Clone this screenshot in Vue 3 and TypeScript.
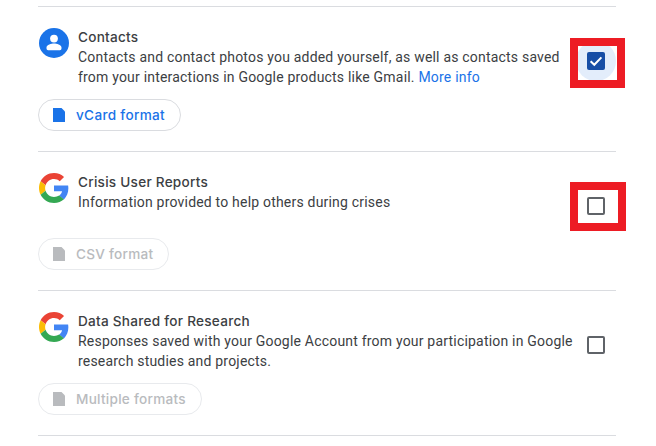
<script setup lang="ts">
interface Item {
  title: string
  desc: string
  link?: string
  format: string
  icon: 'contacts' | 'google'
  checked: boolean
  disabled: boolean
  mark?: string
}
const items: Item[] = [
  {
    title: 'Contacts',
    desc: 'Contacts and contact photos you added yourself, as well as contacts saved from your interactions in Google products like Gmail.',
    link: 'More info',
    format: 'vCard format',
    icon: 'contacts',
    checked: true,
    disabled: false,
    mark: 'mark-a',
  },
  {
    title: 'Crisis User Reports',
    desc: 'Information provided to help others during crises',
    format: 'CSV format',
    icon: 'google',
    checked: false,
    disabled: true,
    mark: 'mark-b',
  },
  {
    title: 'Data Shared for Research',
    desc: 'Responses saved with your Google Account from your participation in Google research studies and projects.',
    format: 'Multiple formats',
    icon: 'google',
    checked: false,
    disabled: true,
  },
]
</script>

<template>
  <main class="list">
    <section v-for="item in items" :key="item.title" class="item">
      <div class="row">
        <svg v-if="item.icon === 'contacts'" class="logo" viewBox="0 0 30 30">
          <circle cx="15" cy="15" r="15" fill="#1a73e8" />
          <circle cx="15" cy="10.6" r="3.9" fill="#fff" />
          <path d="M7.5 19.6c0-2.7 5-4 7.5-4s7.5 1.3 7.5 4v1a1.6 1.6 0 0 1-1.6 1.6H9.1a1.6 1.6 0 0 1-1.6-1.6z" fill="#fff" />
        </svg>
        <svg v-else class="logo" viewBox="0 0 48 48">
          <path fill="#EA4335" d="M24 9.5c3.54 0 6.71 1.22 9.21 3.6l6.85-6.85C35.9 2.38 30.47 0 24 0 14.62 0 6.51 5.38 2.56 13.22l7.98 6.19C12.43 13.72 17.74 9.5 24 9.5z" />
          <path fill="#4285F4" d="M46.98 24.55c0-1.57-.15-3.09-.38-4.55H24v9.02h12.94c-.58 2.96-2.26 5.48-4.78 7.18l7.73 6c4.51-4.18 7.09-10.36 7.09-17.65z" />
          <path fill="#FBBC05" d="M10.53 28.59c-.48-1.45-.76-2.99-.76-4.59s.27-3.14.76-4.59l-7.98-6.19C.92 16.46 0 20.12 0 24c0 3.88.92 7.54 2.56 10.78l7.97-6.19z" />
          <path fill="#34A853" d="M24 48c6.48 0 11.93-2.13 15.89-5.81l-7.73-6c-2.15 1.45-4.92 2.3-8.16 2.3-6.26 0-11.57-4.22-13.47-9.91l-7.98 6.19C6.51 42.62 14.62 48 24 48z" />
        </svg>
        <div class="text">
          <h3 class="title">{{ item.title }}</h3>
          <p class="desc">
            {{ item.desc }}
            <a v-if="item.link" class="link">{{ item.link }}</a>
          </p>
        </div>
        <div class="check-wrap" :class="{ on: item.checked }">
          <span class="box" :class="{ checked: item.checked }">
            <svg v-if="item.checked" viewBox="0 0 18 18" class="tick">
              <path d="M3.6 9.2l3.7 3.6 7.1-7.4" fill="none" stroke="#fff" stroke-width="2" />
            </svg>
          </span>
          <span v-if="item.mark" class="mark" :class="item.mark"></span>
        </div>
      </div>
      <div class="pill" :class="{ disabled: item.disabled }">
        <svg class="doc" viewBox="0 0 12 14">
          <path d="M0 0h8.5L12 3.5V14H0z" fill="currentColor" />
        </svg>
        <span>{{ item.format }}</span>
      </div>
    </section>
  </main>
</template>

<style scoped>
.list {
  box-sizing: border-box;
  width: 578px;
  margin: 6px 0 0 38px;
  border-top: 1px solid #dadce0;
  font-family: Roboto, "Liberation Sans", sans-serif;
  color: #3c4043;
}
.item {
  padding: 20px 0 20px;
  border-bottom: 1px solid #dadce0;
}
.row {
  display: flex;
  align-items: flex-start;
}
.logo {
  flex: none;
  width: 30px;
  height: 30px;
  margin: 1px 9px 0 1px;
}
.text {
  flex: 1;
  min-width: 0;
}
.title {
  margin: 0;
  font-family: Inter, Roboto, sans-serif;
  font-size: 13.6px;
  font-weight: 500;
  line-height: 20px;
  letter-spacing: 0.25px;
}
.desc {
  margin: 0;
  font-size: 14px;
  line-height: 20px;
  letter-spacing: 0.2px;
}
.link {
  color: #1a73e8;
}
.check-wrap {
  position: relative;
  flex: none;
  display: flex;
  align-items: center;
  justify-content: center;
  width: 40px;
  height: 40px;
  margin-top: 14px;
  border-radius: 50%;
}
.check-wrap.on {
  background: #e3edfb;
}
.box {
  box-sizing: border-box;
  width: 18px;
  height: 18px;
  border: 2px solid #5f6368;
  border-radius: 2px;
}
.box.checked {
  border: 0;
  background: #174ea6;
}
.tick {
  display: block;
  width: 18px;
  height: 18px;
}
.mark {
  position: absolute;
  box-sizing: border-box;
  border: 8px solid #ed1c24;
  pointer-events: none;
}
.mark-a {
  left: -6px;
  top: -3px;
  width: 55px;
  height: 50px;
}
.mark-b {
  left: -6px;
  top: -4px;
  width: 56px;
  height: 49px;
}
.pill {
  display: inline-flex;
  align-items: center;
  box-sizing: border-box;
  height: 32px;
  margin-top: 12px;
  padding: 0 15px 0 14px;
  border: 1px solid #dadce0;
  border-radius: 16px;
  color: #1a73e8;
  font-family: Inter, Roboto, sans-serif;
  font-size: 13.6px;
  font-weight: 500;
  letter-spacing: 0.3px;
}
.pill.disabled {
  border-color: #e8eaed;
  color: #b9bbbe;
  letter-spacing: 0.25px;
}
.doc {
  width: 12px;
  height: 14px;
  margin-right: 11px;
}
</style>

<style>
html, body {
  background: #fff;
}
</style>
